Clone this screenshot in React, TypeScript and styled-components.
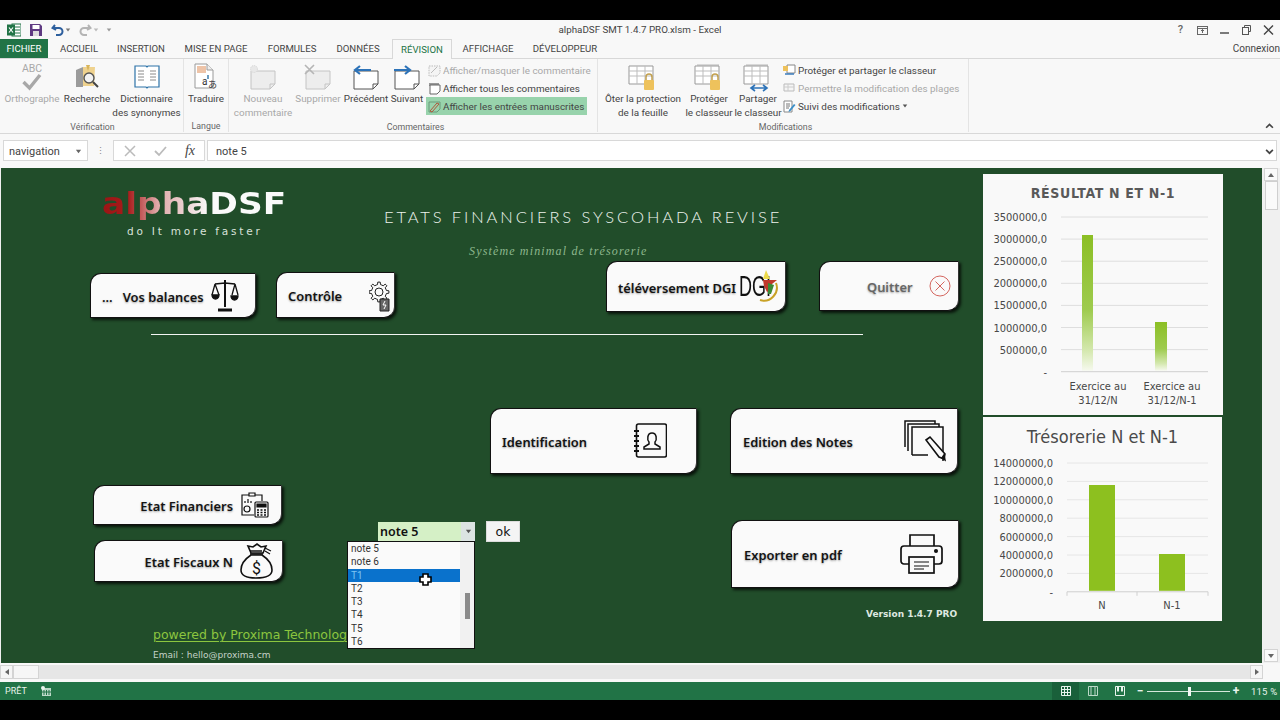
import React from "react";
import styled, { createGlobalStyle, css } from "styled-components";

const UI_FONT = `Roboto, "Open Sans", sans-serif`;
const SHEET_FONT = `"DejaVu Sans", Verdana, sans-serif`;
const NARROW_FONT = `"DejaVu Sans Condensed", "DejaVu Sans", sans-serif`;
const BUTTON_FONT = `"Noto Sans", "Open Sans", sans-serif`;

const GlobalStyle = createGlobalStyle`
  html, body {
    margin: 0;
    padding: 0;
    background: #000;
    width: 1280px;
    height: 720px;
    overflow: hidden;
  }
  * {
    box-sizing: border-box;
  }
`;

type BoxProps = { $x: number; $y: number; $w: number; $h: number };

const placed = css<BoxProps>`
  position: absolute;
  left: ${({ $x }) => $x}px;
  top: ${({ $y }) => $y}px;
  width: ${({ $w }) => $w}px;
  height: ${({ $h }) => $h}px;
`;

const Window = styled.div`
  width: 1280px;
  height: 720px;
  display: flex;
  flex-direction: column;
  font-family: ${UI_FONT};
  background: #f8f8f8;
  color: #444;
`;

const BlackBar = styled.div`
  height: 20px;
  flex: none;
  background: #000;
`;

/* title bar */
const TitleBar = styled.div`
  height: 19px;
  flex: none;
  position: relative;
  display: flex;
  align-items: center;
  justify-content: space-between;
  padding: 0 5px 0 7px;
`;

const QuickAccess = styled.div`
  display: flex;
  align-items: center;
`;

const QuickIcon = styled.span<{ $ml: number }>`
  display: flex;
  margin-left: ${({ $ml }) => $ml}px;
`;

const WindowTitle = styled.div`
  position: absolute;
  left: 0;
  right: 0;
  text-align: center;
  font-size: 9.8px;
  line-height: 19px;
  color: #444;
`;

const WindowControls = styled.div`
  position: relative;
  display: flex;
  align-items: center;
  gap: 9px;
`;

const HelpMark = styled.span`
  width: 13px;
  text-align: center;
  font-size: 11px;
  line-height: 13px;
  font-weight: 500;
  color: #666;
`;

/* tabs */
const TabRow = styled.div`
  height: 20px;
  flex: none;
  display: flex;
  align-items: stretch;
  border-bottom: 1px solid #d8d8d8;
  position: relative;
`;

const FileTab = styled.div`
  width: 48px;
  background: #217346;
  color: #fff;
  font-size: 9.6px;
  line-height: 20px;
  text-align: center;
`;

const Tab = styled.div<{ $active?: boolean; $w: number }>`
  width: ${({ $w }) => $w}px;
  text-align: center;
  font-size: 9.6px;
  line-height: 19px;
  color: ${({ $active }) => ($active ? "#217346" : "#444")};
  ${({ $active }) =>
    $active &&
    css`
      background: #f8f8f8;
      border: 1px solid #d8d8d8;
      border-bottom: 0;
      height: 20px;
    `}
`;

const SignIn = styled.div`
  position: absolute;
  right: 0;
  top: 0;
  font-size: 10px;
  line-height: 19px;
  color: #444;
`;

/* ribbon */
const Ribbon = styled.div`
  height: 75px;
  flex: none;
  display: flex;
  border-bottom: 1px solid #d8d8d8;
  position: relative;
`;

const RibbonGroup = styled.div<{ $w: number; $pl?: number }>`
  width: ${({ $w }) => $w}px;
  flex: none;
  display: flex;
  flex-direction: column;
  padding-left: ${({ $pl }) => $pl ?? 0}px;
  border-right: 1px solid #e4e4e4;
  margin-bottom: 1px;
`;

const GroupItems = styled.div`
  flex: 1;
  display: flex;
  padding-top: 3px;
`;

const GroupLabel = styled.div`
  height: 14px;
  font-size: 8.8px;
  line-height: 16px;
  text-align: center;
  color: #666;
`;

const BigButton = styled.div<{ $w: number; $off?: boolean }>`
  width: ${({ $w }) => $w}px;
  flex: none;
  display: flex;
  flex-direction: column;
  align-items: center;
  color: ${({ $off }) => ($off ? "#a8a8a8" : "#444")};
`;

const BigIcon = styled.div`
  height: 30px;
  display: flex;
  align-items: center;
  justify-content: center;
`;

const BigLabel = styled.div`
  font-size: 9.9px;
  line-height: 13.5px;
  text-align: center;
  white-space: nowrap;
`;

const SmallStack = styled.div`
  display: flex;
  flex-direction: column;
  margin-top: -1px;
`;

const SmallRow = styled.div<{ $off?: boolean; $on?: boolean; $w?: number }>`
  height: 18px;
  width: ${({ $w }) => ($w ? `${$w}px` : "auto")};
  display: flex;
  align-items: center;
  gap: 2px;
  padding-left: 2px;
  font-size: 9.9px;
  white-space: nowrap;
  color: ${({ $off }) => ($off ? "#a8a8a8" : "#444")};
  background: ${({ $on }) => ($on ? "#98d3ac" : "transparent")};

  svg {
    flex: none;
  }
`;

const Collapse = styled.div`
  position: absolute;
  right: 6px;
  bottom: 3px;
  display: flex;
`;

/* formula bar */
const FormulaWrap = styled.div`
  height: 34px;
  flex: none;
  display: flex;
  align-items: flex-start;
  padding: 6px 3px 0;
`;

const FieldBox = styled.div<{ $w: number }>`
  width: ${({ $w }) => $w}px;
  flex: none;
  height: 21px;
  background: #fff;
  border: 1px solid #d8d8d8;
  display: flex;
  align-items: center;
  font-size: 11px;
  color: #444;
`;

const NameBox = styled(FieldBox)`
  justify-content: space-between;
  padding: 1px 5px 0;
`;

const Grip = styled.div`
  width: 25px;
  flex: none;
  height: 21px;
  display: flex;
  align-items: center;
  justify-content: center;
  color: #888;
  font-size: 9px;
`;

const FormulaTools = styled(FieldBox)`
  justify-content: space-between;
  padding: 0 9px 0 10px;
  font-family: "Liberation Serif", serif;
  font-style: italic;
  font-size: 14px;
`;

const FormulaInput = styled(FieldBox)`
  margin-left: 2px;
  flex: 1;
  justify-content: space-between;
  padding: 1px 2px 0 8px;
`;

/* worksheet canvas */
const SheetRow = styled.div`
  height: 495px;
  flex: none;
  display: flex;
`;

const Sheet = styled.div`
  position: relative;
  width: 1262px;
  background: #214d2a;
  border-left: 1px solid #f0f0f0;
  overflow: hidden;
  font-family: ${SHEET_FONT};
`;

const ScrollColumn = styled.div`
  flex: 1;
  display: flex;
  flex-direction: column;
  align-items: center;
  justify-content: space-between;
  background: #f0f0f0;
  padding: 0 1px 1px;
  position: relative;
`;

const ScrollArrow = styled.div`
  width: 14px;
  height: 13px;
  background: #fafafa;
  border: 1px solid #d4d4d4;
  display: flex;
  align-items: center;
  justify-content: center;
`;

const ScrollThumbV = styled.div`
  position: absolute;
  left: 3px;
  top: 13px;
  width: 13px;
  height: 29px;
  background: #fafafa;
  border: 1px solid #cfcfcf;
`;

const Logo = styled.div`
  ${placed};
  text-align: left;
`;

const LogoMark = styled.div`
  font-size: 31px;
  line-height: 38px;
  font-weight: 700;
  width: 166px;
  white-space: nowrap;
  transform: scaleX(1.11);
  transform-origin: left center;
  background: linear-gradient(90deg, #9a1515 0, #a81a1a 14%, #e0a8a8 30%, #ecd4d4 46%, #fafafa 58%, #fafafa 100%);
  -webkit-background-clip: text;
  background-clip: text;
  color: transparent;
`;

const LogoTag = styled.div`
  margin: 2px 0 0 25px;
  font-size: 10.5px;
  line-height: 14px;
  letter-spacing: 2.8px;
  white-space: nowrap;
  color: #d9e2da;
`;

const HeadLine = styled.div`
  ${placed};
  font-family: Lato, sans-serif;
  font-weight: 300;
  font-size: 16.5px;
  line-height: 18px;
  letter-spacing: 2.9px;
  white-space: nowrap;
  color: #edf3ed;
`;

const SubLine = styled.div`
  ${placed};
  font-family: "Liberation Serif", serif;
  font-style: italic;
  font-size: 12px;
  line-height: 14px;
  letter-spacing: 1.15px;
  white-space: nowrap;
  color: #8eb88e;
`;

const Rule = styled.div`
  ${placed};
  background: #f2f5f2;
`;

const SheetButton = styled.div<BoxProps & { $justify?: string; $pad: string }>`
  ${placed};
  display: flex;
  align-items: center;
  justify-content: ${({ $justify }) => $justify ?? "space-between"};
  padding: ${({ $pad }) => $pad};
  background: #fafafa;
  border: 1px solid #111;
  border-right-color: #333;
  border-radius: 11px 0 11px 0;
  box-shadow: 2px 2px 3px rgba(0, 0, 0, 0.75);
`;

const ButtonText = styled.span<{ $muted?: boolean }>`
  font-family: ${BUTTON_FONT};
  font-weight: 600;
  font-size: 12.9px;
  margin-top: 2px;
  white-space: nowrap;
  color: ${({ $muted }) => ($muted ? "#666" : "#141414")};
  text-shadow: 0 1px 2px rgba(0, 0, 0, 0.35);
`;

const DgiMark = styled.span`
  position: relative;
  display: inline-flex;
  align-items: center;
  margin-left: 3px;
  width: 42px;
  height: 42px;
`;

const DgiText = styled.span`
  font-family: "Liberation Sans", sans-serif;
  font-size: 29px;
  color: #111;
  transform: scaleX(0.62);
  transform-origin: left center;
`;

const DgiFlag = styled.svg`
  position: absolute;
  left: 0;
  top: 0;
`;

const Combo = styled.div<BoxProps>`
  ${placed};
  display: flex;
`;

const ComboValue = styled.div`
  flex: 1;
  background: #d5f0c6;
  font-family: ${BUTTON_FONT};
  font-size: 12.5px;
  font-weight: 600;
  line-height: 19px;
  padding-left: 2px;
  color: #111;
`;

const ComboArrow = styled.div`
  width: 14px;
  background: #dce4e2;
  display: flex;
  align-items: center;
  justify-content: center;
`;

const OkButton = styled.div<BoxProps>`
  ${placed};
  background: #f4f4f4;
  border: 1px solid #dcdcdc;
  font-size: 12.5px;
  line-height: 20px;
  text-align: center;
  color: #111;
`;

const DropList = styled.div<BoxProps>`
  ${placed};
  display: flex;
  background: #fafafa;
  border: 1px solid #111;
  overflow: hidden;
  z-index: 3;
  font-family: ${UI_FONT};
`;

const DropRows = styled.div`
  width: 112px;
  flex: none;
`;

const DropRow = styled.div<{ $on?: boolean }>`
  height: 13.3px;
  font-size: 10px;
  line-height: 13.3px;
  padding-left: 3px;
  color: ${({ $on }) => ($on ? "#7cc4f2" : "#333")};
  background: ${({ $on }) => ($on ? "#0a72cc" : "transparent")};
`;

const DropScroll = styled.div`
  flex: 1;
  background: #f1f1f1;
  position: relative;
`;

const DropThumb = styled.div<{ $top: number }>`
  position: absolute;
  left: 5px;
  top: ${({ $top }) => $top}px;
  width: 5px;
  height: 26px;
  background: #8a8a8a;
`;

const Pointer = styled.svg`
  position: absolute;
  left: 418px;
  top: 405px;
  z-index: 4;
`;

const FootText = styled.div<BoxProps & { $size: number; $color: string; $spacing: number; $bold?: boolean }>`
  ${placed};
  font-size: ${({ $size }) => $size}px;
  line-height: ${({ $h }) => $h}px;
  color: ${({ $color }) => $color};
  letter-spacing: ${({ $spacing }) => $spacing}px;
  font-weight: ${({ $bold }) => ($bold ? 600 : 400)};
  white-space: nowrap;
`;

const PoweredLink = styled(FootText)`
  text-decoration: underline;
  text-decoration-thickness: 1px;
  text-underline-offset: 2px;
`;

const ChartPanel = styled.div<BoxProps>`
  ${placed};
  background: #f9f9f9;
`;

const ChartTitle = styled.div<{ $top: number; $bold?: boolean; $size: number }>`
  position: absolute;
  left: 0;
  right: 0;
  top: ${({ $top }) => $top}px;
  text-align: center;
  font-family: ${NARROW_FONT};
  font-size: ${({ $size }) => $size}px;
  line-height: 20px;
  font-weight: ${({ $bold }) => ($bold ? 700 : 400)};
  letter-spacing: ${({ $bold }) => ($bold ? 0.65 : 0)}px;
  color: ${({ $bold }) => ($bold ? "#595959" : "#4a4a4a")};
`;

const ChartSvg = styled.svg`
  display: block;
  font-family: ${NARROW_FONT};
  font-size: 11px;
  fill: #484848;
`;

/* bottom bars */
const HScroll = styled.div`
  height: 19px;
  flex: none;
  background: #f8f8f8;
  padding: 2px 17px 3px 0;
  display: flex;
`;

const HTrack = styled.div`
  flex: 1;
  background: #e6e6e6;
  display: flex;
  align-items: stretch;
  justify-content: space-between;
`;

const HLeft = styled.div`
  display: flex;
`;

const HEnd = styled.div`
  width: 13px;
  display: flex;
  align-items: center;
  justify-content: center;
  background: #f6f6f6;
  border: 1px solid #d4d4d4;
`;

const HThumb = styled.div`
  width: 26px;
  background: #f6f6f6;
  border: 1px solid #d4d4d4;
`;

const StatusBar = styled.div`
  height: 18px;
  flex: none;
  background: #217346;
  color: #e8f3ec;
  font-size: 9px;
  display: flex;
  align-items: stretch;
  padding-left: 5px;
  position: relative;
`;

const StatusLeft = styled.div`
  display: flex;
  align-items: center;
  gap: 14px;
`;

const StatusRight = styled.div`
  margin-left: auto;
  display: flex;
  align-items: center;
  padding-right: 6px;
`;

const ViewButton = styled.div<{ $on?: boolean }>`
  width: 27px;
  height: 18px;
  display: flex;
  align-items: center;
  justify-content: center;
  background: ${({ $on }) => ($on ? "#19603a" : "transparent")};
`;

const ZoomSlider = styled.div`
  width: 83px;
  height: 1px;
  background: #d5e8dc;
  position: relative;
  margin: 0 1px 0 2px;
`;

const ZoomThumb = styled.div`
  position: absolute;
  left: 41px;
  top: -4px;
  width: 3px;
  height: 9px;
  background: #f2f7f4;
`;

const ZoomSign = styled.span<{ $ml?: number }>`
  font-size: 12px;
  width: 10px;
  margin-left: ${({ $ml }) => $ml ?? 0}px;
  text-align: center;
  line-height: 12px;
  font-weight: 700;
`;

const ZoomValue = styled.span`
  margin-left: 10px;
  width: 23px;
  text-align: right;
  white-space: nowrap;
  font-size: 9.5px;
  letter-spacing: 0.2px;
`;

/* ribbon icons */
const SpellIcon = () => (
  <svg width="36" height="30" viewBox="0 0 36 30">
    <text x="18" y="10" textAnchor="middle" fontSize="10.5" fill="#a9a9a9" fontFamily="Roboto">ABC</text>
    <path d="M9.5 20l6 6L26 13" stroke="#a8a8a8" strokeWidth="3.4" fill="none" />
  </svg>
);

const SearchIcon = () => (
  <svg width="28" height="26" viewBox="0 0 28 26">
    <path d="M3 6l7-3v20H3z" fill="#9b9b9b" />
    <path d="M10 3h5l7 0 -1 19H10z" fill="#efd28e" />
    <path d="M13 1l4 0 -2 6z" fill="#d9b55a" />
    <circle cx="16" cy="14" r="5" fill="#f2f2f2" stroke="#555" strokeWidth="1.4" />
    <path d="M20 18l5 5" stroke="#444" strokeWidth="2" />
  </svg>
);

const BookIcon = () => (
  <svg width="28" height="26" viewBox="0 0 28 26">
    <path d="M2 2h11l1 1 1-1h11v21H15l-1 1-1-1H2z" fill="#fff" stroke="#2d73a8" strokeWidth="1.2" />
    <path d="M5 7h6M5 10h6M5 13h6M5 16h6M17 7h6M17 10h6M17 13h6M17 16h6" stroke="#8a8a8a" />
  </svg>
);

const TranslateIcon = () => (
  <svg width="26" height="28" viewBox="0 0 26 28">
    <path d="M2 1h12l6 6v18H2z" fill="#fff" stroke="#9a9a9a" />
    <path d="M4 3h9v7H4z" fill="#eec4a8" />
    <path d="M14 1v6h6" fill="#eee" stroke="#9a9a9a" />
    <text x="9" y="22" fontSize="10" fill="#333" fontFamily="Roboto">a</text>
    <text x="15" y="25" fontSize="9" fill="#333" fontFamily="Noto Sans CJK JP">あ</text>
    <path d="M15 12v4" stroke="#2d73a8" strokeWidth="1.4" />
  </svg>
);

const NoteIcon = ({ off, mark }: { off?: boolean; mark: "new" | "del" | "prev" | "next" }) => {
  const line = off ? "#c4c4c4" : "#555";
  return (
    <svg width="30" height="26" viewBox="0 0 30 26">
      <path d="M3 7h24v13l-5 5H3z" fill={off ? "#ededed" : "#fff"} stroke={line} />
      <path d="M27 20h-5v5" fill="none" stroke={line} />
      {mark === "new" && <circle cx="6" cy="5" r="3.5" fill="#e8e8e8" stroke="#d5d5d5" strokeDasharray="1 1" />}
      {mark === "del" && <path d="M2 1l9 9M11 1l-9 9" stroke="#b5b5b5" strokeWidth="1.6" />}
      {mark === "prev" && <path d="M20 6H5m4-4L4 6l5 4" fill="none" stroke="#2d73b8" strokeWidth="2.2" />}
      {mark === "next" && <path d="M2 6h15m-4-4l5 4-5 4" fill="none" stroke="#2d73b8" strokeWidth="2.2" />}
    </svg>
  );
};

const MiniNote = ({ kind }: { kind: "toggle" | "all" | "ink" }) => (
  <svg width="13" height="13" viewBox="0 0 13 13">
    {kind === "toggle" && (
      <>
        <path d="M1 2h11v7l-3 3H1z" fill="#f4f4f4" stroke="#bbb" strokeDasharray="1.5 1" />
        <path d="M3 9l6-6" stroke="#bbb" />
      </>
    )}
    {kind === "all" && (
      <>
        <path d="M1 1h10v3H1z" fill="#999" />
        <path d="M2 3h10v6l-3 3H2z" fill="#fff" stroke="#666" />
      </>
    )}
    {kind === "ink" && (
      <>
        <path d="M1 2h11v7l-3 3H1z" fill="none" stroke="#6a9a7a" />
        <path d="M2 11L9 3l2 1-7 8z" fill="none" stroke="#b0553a" />
      </>
    )}
  </svg>
);

const ProtectIcon = ({ arrows, panes }: { arrows?: boolean; panes?: boolean }) => (
  <svg width="30" height="29" viewBox="0 0 30 29">
    {panes && <path d="M3 1h22v3H3z" fill="#d8d8d8" />}
    <path d="M1 3h24v18H1z" fill="#fff" stroke="#999" />
    <path d="M1 8h24M1 13h24M9 3v18M17 3v18" stroke="#bdbdbd" />
    {!arrows && (
      <>
        <path d="M18 17v-3a3 3 0 016 0v3" fill="none" stroke="#c2a04e" strokeWidth="1.5" />
        <rect x="16" y="17" width="10" height="10" rx="1" fill="#eec25c" />
      </>
    )}
    {arrows && <path d="M9 25h14M12 22l-4 3 4 3M20 22l4 3-4 3" fill="none" stroke="#2d73b8" strokeWidth="1.6" />}
  </svg>
);

const MiniSheet = ({ kind }: { kind: "share" | "range" | "track" }) => (
  <svg width="13" height="13" viewBox="0 0 13 13">
    {kind === "share" && (
      <>
        <path d="M4 1h8v8H4z" fill="#fff" stroke="#888" />
        <rect x="0" y="2" width="5" height="5" fill="#eec25c" />
        <path d="M2 10h9" stroke="#2d73b8" strokeWidth="1.4" />
      </>
    )}
    {kind === "range" && (
      <>
        <path d="M1 2h10v7H1z" fill="#f5f5f5" stroke="#bbb" />
        <path d="M1 5h10M5 2v7" stroke="#ccc" />
      </>
    )}
    {kind === "track" && (
      <>
        <path d="M1 1h8v11H1z" fill="#fff" stroke="#888" />
        <path d="M3 4h4M3 6h4M3 8h3" stroke="#777" />
        <path d="M6 10l5-6 1.5 1-5 6-2 1z" fill="#3c8fc8" />
      </>
    )}
  </svg>
);

const Chevron = ({ up, size = 8 }: { up?: boolean; size?: number }) => (
  <svg width={size} height={size} viewBox="0 0 8 8">
    <path d={up ? "M1 6l3-3 3 3" : "M1 2.5l3 3 3-3"} fill="none" stroke="#444" strokeWidth="1.5" />
  </svg>
);

const Triangle = ({ dir, color = "#666", size = 8 }: { dir: "up" | "down" | "left" | "right"; color?: string; size?: number }) => {
  const d = {
    up: "M1 6h6L4 2z",
    down: "M1 2h6L4 6z",
    left: "M6 1v6L2 4z",
    right: "M2 1v6l4-3z",
  }[dir];
  return (
    <svg width={size} height={size} viewBox="0 0 8 8">
      <path d={d} fill={color} />
    </svg>
  );
};

/* icons of the sheet buttons */
const ScaleIcon = () => (
  <svg width="28" height="34" viewBox="0 0 28 34" fill="none" stroke="#111" strokeWidth="1.3">
    <path d="M14 1v27" strokeWidth="2" />
    <path d="M4 5l10-1 10 1" />
    <path d="M4 5L1 16M4 5l4 11M24 5l-3 11M24 5l3 11" />
    <path d="M1 16h7a3.5 4 0 01-7 0zM20 17h7a3.5 4 0 01-7 0z" fill="#111" />
    <path d="M7 31h14" strokeWidth="3" />
  </svg>
);

// outline of a toothed wheel, teeth spread evenly round the centre
const gearPath = (cx: number, cy: number, outer: number, inner: number, teeth: number) => {
  const points: string[] = [];
  for (let i = 0; i < teeth; i++) {
    const step = (Math.PI * 2) / teeth;
    const a = i * step;
    [
      [inner, a - step * 0.5],
      [inner, a - step * 0.25],
      [outer, a - step * 0.15],
      [outer, a + step * 0.15],
      [inner, a + step * 0.25],
    ].forEach(([r, t]) => points.push(`${(cx + r * Math.cos(t)).toFixed(1)} ${(cy + r * Math.sin(t)).toFixed(1)}`));
  }
  return `M${points.join("L")}z`;
};

const GearDocIcon = () => (
  <svg width="22" height="34" viewBox="0 0 22 34" fill="none" stroke="#222" strokeWidth="1">
    <path d={gearPath(10, 14, 10, 7.5, 8)} />
    <circle cx="10" cy="14" r="4" />
    <path d="M11 21h9v12h-9z" fill="#666" stroke="#222" />
    <path d="M16 23l-2 4h3l-2 4" stroke="#fff" />
  </svg>
);

const CloseCircleIcon = () => (
  <svg width="22" height="22" viewBox="0 0 22 22" fill="none" stroke="#d4665f" strokeWidth="1">
    <circle cx="11" cy="11" r="10" />
    <path d="M6.5 6.5l9 9M15.5 6.5l-9 9" />
  </svg>
);

const ContactIcon = () => (
  <svg width="34" height="36" viewBox="0 0 34 36" fill="none" stroke="#111" strokeWidth="1.6">
    <rect x="3.5" y="1" width="30" height="33" rx="2" />
    <path d="M1 8h5M1 13h5M1 18h5M1 23h5M1 28h5" strokeWidth="1.8" />
    <path d="M11 26v-2l5-3v-2c-2-2-2-9 3-9s5 7 3 9v2l5 3v2z" strokeWidth="1.5" />
  </svg>
);

const PagesIcon = () => (
  <svg width="42" height="42" viewBox="0 0 42 42" fill="none" stroke="#111" strokeWidth="1.5">
    <path d="M1 27V1h30v3" />
    <path d="M4 31V4h31v3" fill="#fafafa" />
    <path d="M8 35V7h31v34" fill="#fafafa" />
    <path d="M8 35h16" />
    <path d="M22 20l4-3 15 17-1 5-5-2z" fill="#fafafa" strokeWidth="1.6" />
    <path d="M38 38l2-3 1 5z" fill="#111" />
  </svg>
);

const PrinterIcon = () => (
  <svg width="43" height="40" viewBox="0 0 43 40" fill="none" stroke="#111" strokeWidth="1.7">
    <path d="M10 12V1h24v11" />
    <path d="M9 30H4a3 3 0 01-3-3V15a3 3 0 013-3h35a3 3 0 013 3v12a3 3 0 01-3 3h-5" />
    <rect x="9" y="23" width="25" height="16" />
    <path d="M14 28h15M14 32h15M14 35h10" strokeWidth="1.2" />
    <circle cx="36" cy="17" r="1.2" fill="#111" />
  </svg>
);

const ReportIcon = () => (
  <svg width="28" height="26" viewBox="0 0 28 26" fill="none" stroke="#111" strokeWidth="1.2">
    <path d="M13 23H1V3h20v6" />
    <path d="M8 1h6v3H8z" fill="#fafafa" />
    <circle cx="6" cy="17" r="3" />
    <path d="M4 11v-2M7 11V7M10 11V9" />
    <rect x="14" y="10" width="13" height="15" rx="1" fill="#fafafa" />
    <path d="M16 12h9v3h-9z" fill="#111" />
    <path d="M16 18h2M19.5 18h2M23 18h2M16 20.5h2M19.5 20.5h2M23 20.5h2M16 23h2M19.5 23h2M23 23h2" strokeWidth="1.4" />
  </svg>
);

const MoneyBagIcon = () => (
  <svg width="33" height="37" viewBox="0 0 33 37" fill="none" stroke="#111" strokeWidth="1.6">
    <path d="M8 3l5 1 4-3 4 3 5-1-3 7H11z" />
    <path d="M10 8l12 0M10 11h13" />
    <path d="M25 5l6 3M25 8l5 3" strokeWidth="1.2" />
    <path d="M11 12C5 16 1 22 1 27c0 6 5 8 15 8s16-2 16-8c0-5-4-11-10-15z" />
    <text x="16.5" y="31" textAnchor="middle" fontSize="16" fill="#111" stroke="none" fontFamily="Roboto">$</text>
  </svg>
);

const CrossPointer = () => (
  <Pointer width="13" height="13" viewBox="0 0 13 13">
    <path d="M4 1h5v3h3v5H9v3H4V9H1V4h3z" fill="#fff" stroke="#000" strokeWidth="1.6" />
  </Pointer>
);

type ChartSpec = {
  width: number;
  height: number;
  ticks: string[];
  gridTop: number;
  gridStep: number;
  gridLeft: number;
  gridRight: number;
  labelRight: number;
  gridColor: string;
  bars: { x: number; w: number; top: number }[];
  fill: string;
  categories: { x: number; lines: string[] }[];
  labelY: number;
  tickMarks?: number[];
};

const resultChart: ChartSpec = {
  width: 240,
  height: 241,
  ticks: ["3500000,0", "3000000,0", "2500000,0", "2000000,0", "1500000,0", "1000000,0", "500000,0", "-"],
  gridTop: 43,
  gridStep: 22.1,
  gridLeft: 78,
  gridRight: 225,
  labelRight: 64,
  gridColor: "#dedede",
  bars: [
    { x: 99, w: 11, top: 61 },
    { x: 172, w: 12, top: 148 },
  ],
  fill: "url(#fadeBar)",
  categories: [
    { x: 115, lines: ["Exercice au", "31/12/N"] },
    { x: 189, lines: ["Exercice au", "31/12/N-1"] },
  ],
  labelY: 216,
};

const cashChart: ChartSpec = {
  width: 239,
  height: 204,
  ticks: ["14000000,0", "12000000,0", "10000000,0", "8000000,0", "6000000,0", "4000000,0", "2000000,0", "-"],
  gridTop: 46,
  gridStep: 18.4,
  gridLeft: 84,
  gridRight: 225,
  labelRight: 70,
  gridColor: "#e6e6e6",
  bars: [
    { x: 106, w: 26, top: 68 },
    { x: 176, w: 26, top: 137 },
  ],
  fill: "#8dc01f",
  categories: [
    { x: 119, lines: ["N"] },
    { x: 189, lines: ["N-1"] },
  ],
  labelY: 192,
  tickMarks: [84, 154, 225],
};

const ChartPlot = ({ spec }: { spec: ChartSpec }) => {
  const bottom = spec.gridTop + spec.gridStep * (spec.ticks.length - 1);
  return (
    <ChartSvg width={spec.width} height={spec.height} viewBox={`0 0 ${spec.width} ${spec.height}`}>
      <defs>
        <linearGradient id="fadeBar" x1="0" y1="0" x2="0" y2="1">
          <stop offset="0" stopColor="#8cbf25" />
          <stop offset="0.55" stopColor="#9ecb4e" />
          <stop offset="0.85" stopColor="#d4e8ae" />
          <stop offset="1" stopColor="#f6f9ee" />
        </linearGradient>
      </defs>
      {spec.ticks.map((tick, i) => {
        const y = spec.gridTop + spec.gridStep * i;
        return (
          <g key={tick}>
            <line x1={spec.gridLeft} x2={spec.gridRight} y1={y} y2={y} stroke={i === spec.ticks.length - 1 ? "#cfcfcf" : spec.gridColor} />
            <text x={spec.labelRight} y={y + 4} textAnchor="end">{tick}</text>
          </g>
        );
      })}
      {spec.tickMarks?.map((x) => (
        <line key={x} x1={x} x2={x} y1={bottom} y2={bottom + 4} stroke="#cfcfcf" />
      ))}
      {spec.bars.map((bar) => (
        <rect key={bar.x} x={bar.x} y={bar.top} width={bar.w} height={bottom - bar.top - 1} fill={spec.fill} />
      ))}
      {spec.categories.map((cat) =>
        cat.lines.map((line, i) => (
          <text key={line} x={cat.x} y={spec.labelY + i * 14} textAnchor="middle">{line}</text>
        ))
      )}
    </ChartSvg>
  );
};

const listItems = ["note 5", "note 6", "T1", "T2", "T3", "T4", "T5", "T6"];

export default function App() {
  return (
    <Window>
      <GlobalStyle />
      <BlackBar />
      <TitleBar>
        <QuickAccess>
          <svg width="14" height="14" viewBox="0 0 14 14">
            <rect x="5" y="1" width="9" height="12" fill="#fff" stroke="#217346" />
            <path d="M7 4h6M7 7h6M7 10h6" stroke="#217346" />
            <rect x="0" y="1.5" width="8" height="11" fill="#217346" />
            <path d="M2 4.5l4 5M6 4.5l-4 5" stroke="#fff" strokeWidth="1.2" />
          </svg>
          <QuickIcon $ml={9}>
            <svg width="12" height="12" viewBox="0 0 12 12">
              <path d="M0 0h10l2 2v10H0z" fill="#5f3a82" />
              <rect x="2.5" y="1" width="7" height="4" fill="#fff" />
              <rect x="3" y="7" width="6" height="5" fill="#ddd" />
            </svg>
          </QuickIcon>
          <QuickIcon $ml={9}>
            <svg width="13" height="12" viewBox="0 0 13 12" fill="none" stroke="#2d5f9e" strokeWidth="2">
              <path d="M4 1L1.5 4 5 6M2 4h6a3.5 3.5 0 010 7H5" />
            </svg>
          </QuickIcon>
          <QuickIcon $ml={1}><Triangle dir="down" color="#777" size={6} /></QuickIcon>
          <QuickIcon $ml={8}>
            <svg width="13" height="12" viewBox="0 0 13 12" fill="none" stroke="#b4b4b4" strokeWidth="2">
              <path d="M9 1l2.5 3L8 6M11 4H5a3.5 3.5 0 000 7h3" />
            </svg>
          </QuickIcon>
          <QuickIcon $ml={1}><Triangle dir="down" color="#bbb" size={6} /></QuickIcon>
          <QuickIcon $ml={7}><Triangle dir="down" color="#999" size={6} /></QuickIcon>
        </QuickAccess>
        <WindowTitle>alphaDSF SMT 1.4.7 PRO.xlsm - Excel</WindowTitle>
        <WindowControls>
          <HelpMark>?</HelpMark>
          <svg width="13" height="12" viewBox="0 0 13 12" fill="none" stroke="#666">
            <rect x="1.5" y="2.5" width="10" height="8" />
            <path d="M1.5 4.5h10M6.5 9V5.5M5 7l1.5-1.5L8 7" />
          </svg>
          <svg width="13" height="12" viewBox="0 0 13 12" stroke="#444" strokeWidth="1.4">
            <path d="M2 9h9" />
          </svg>
          <svg width="13" height="12" viewBox="0 0 13 12" fill="none" stroke="#555">
            <path d="M4.5 3.5V1.5h6v6h-2" />
            <rect x="2.5" y="3.5" width="6" height="7" />
          </svg>
          <svg width="13" height="12" viewBox="0 0 13 12" stroke="#444" strokeWidth="1.4">
            <path d="M2 1.5l9 9M11 1.5l-9 9" />
          </svg>
        </WindowControls>
      </TitleBar>

      <TabRow>
        <FileTab>FICHIER</FileTab>
        <Tab $w={62}>ACCUEIL</Tab>
        <Tab $w={62}>INSERTION</Tab>
        <Tab $w={88}>MISE EN PAGE</Tab>
        <Tab $w={64}>FORMULES</Tab>
        <Tab $w={68}>DONNÉES</Tab>
        <Tab $w={60} $active>RÉVISION</Tab>
        <Tab $w={72}>AFFICHAGE</Tab>
        <Tab $w={82}>DÉVELOPPEUR</Tab>
        <SignIn>Connexion</SignIn>
      </TabRow>

      <Ribbon>
        <RibbonGroup $w={184} $pl={2}>
          <GroupItems>
            <BigButton $w={60} $off>
              <BigIcon><SpellIcon /></BigIcon>
              <BigLabel>Orthographe</BigLabel>
            </BigButton>
            <BigButton $w={50}>
              <BigIcon><SearchIcon /></BigIcon>
              <BigLabel>Recherche</BigLabel>
            </BigButton>
            <BigButton $w={69}>
              <BigIcon><BookIcon /></BigIcon>
              <BigLabel>Dictionnaire<br />des synonymes</BigLabel>
            </BigButton>
          </GroupItems>
          <GroupLabel>Vérification</GroupLabel>
        </RibbonGroup>
        <RibbonGroup $w={45}>
          <GroupItems>
            <BigButton $w={44}>
              <BigIcon><TranslateIcon /></BigIcon>
              <BigLabel>Traduire</BigLabel>
            </BigButton>
          </GroupItems>
          <GroupLabel>Langue</GroupLabel>
        </RibbonGroup>
        <RibbonGroup $w={369} $pl={5}>
          <GroupItems>
            <BigButton $w={58} $off>
              <BigIcon><NoteIcon off mark="new" /></BigIcon>
              <BigLabel>Nouveau<br />commentaire</BigLabel>
            </BigButton>
            <BigButton $w={52} $off>
              <BigIcon><NoteIcon off mark="del" /></BigIcon>
              <BigLabel>Supprimer</BigLabel>
            </BigButton>
            <BigButton $w={44}>
              <BigIcon><NoteIcon mark="prev" /></BigIcon>
              <BigLabel>Précédent</BigLabel>
            </BigButton>
            <BigButton $w={38}>
              <BigIcon><NoteIcon mark="next" /></BigIcon>
              <BigLabel>Suivant</BigLabel>
            </BigButton>
            <SmallStack>
              <SmallRow $off><MiniNote kind="toggle" />Afficher/masquer le commentaire</SmallRow>
              <SmallRow><MiniNote kind="all" />Afficher tous les commentaires</SmallRow>
              <SmallRow $on $w={161}><MiniNote kind="ink" />Afficher les entrées manuscrites</SmallRow>
            </SmallStack>
          </GroupItems>
          <GroupLabel>Commentaires</GroupLabel>
        </RibbonGroup>
        <RibbonGroup $w={371} $pl={5}>
          <GroupItems>
            <BigButton $w={80}>
              <BigIcon><ProtectIcon /></BigIcon>
              <BigLabel>Ôter la protection<br />de la feuille</BigLabel>
            </BigButton>
            <BigButton $w={52}>
              <BigIcon><ProtectIcon panes /></BigIcon>
              <BigLabel>Protéger<br />le classeur</BigLabel>
            </BigButton>
            <BigButton $w={46}>
              <BigIcon><ProtectIcon panes arrows /></BigIcon>
              <BigLabel>Partager<br />le classeur</BigLabel>
            </BigButton>
            <SmallStack>
              <SmallRow><MiniSheet kind="share" />Protéger et partager le classeur</SmallRow>
              <SmallRow $off><MiniSheet kind="range" />Permettre la modification des plages</SmallRow>
              <SmallRow><MiniSheet kind="track" />Suivi des modifications <Triangle dir="down" color="#555" size={6} /></SmallRow>
            </SmallStack>
          </GroupItems>
          <GroupLabel>Modifications</GroupLabel>
        </RibbonGroup>
        <Collapse><Chevron up size={9} /></Collapse>
      </Ribbon>

      <FormulaWrap>
        <NameBox $w={85}>
          navigation
          <Triangle dir="down" color="#666" size={7} />
        </NameBox>
        <Grip>⋮</Grip>
        <FormulaTools $w={92}>
          <svg width="12" height="12" viewBox="0 0 12 12" stroke="#bbb" strokeWidth="1.5">
            <path d="M1 1l10 10M11 1L1 11" />
          </svg>
          <svg width="13" height="12" viewBox="0 0 13 12" fill="none" stroke="#bbb" strokeWidth="1.8">
            <path d="M1 6l4 4 7-8" />
          </svg>
          <span>fx</span>
        </FormulaTools>
        <FormulaInput $w={1071}>
          note 5
          <Chevron size={9} />
        </FormulaInput>
      </FormulaWrap>

      <SheetRow>
        <Sheet>
          <Logo $x={101} $y={16} $w={200} $h={60}>
            <LogoMark>alphaDSF</LogoMark>
            <LogoTag>do It more faster</LogoTag>
          </Logo>
          <HeadLine $x={383} $y={40} $w={420} $h={18}>ETATS FINANCIERS SYSCOHADA REVISE</HeadLine>
          <SubLine $x={468} $y={76} $w={200} $h={14}>Système minimal de trésorerie</SubLine>

          <SheetButton $x={89} $y={105} $w={166} $h={45} $pad="0 16px 0 11px">
            <ButtonText>...&nbsp;&nbsp;&nbsp;Vos balances</ButtonText>
            <ScaleIcon />
          </SheetButton>
          <SheetButton $x={275} $y={104} $w={119} $h={46} $pad="0 3px 0 11px">
            <ButtonText>Contrôle</ButtonText>
            <GearDocIcon />
          </SheetButton>
          <SheetButton $x={605} $y={93} $w={180} $h={51} $pad="0 8px 0 11px">
            <ButtonText>téléversement DGI</ButtonText>
            <DgiMark>
              <DgiText>DGI</DgiText>
              <DgiFlag width="42" height="42" viewBox="0 0 42 42">
                <path d="M27 4l4 9h-7z" fill="#ecd94a" />
                <path d="M24 14h14l-5 4-1 6-4 2-3-6z" fill="#c0392b" />
                <path d="M29 17l6 2-3 9h-3z" fill="#3c8a35" />
                <path d="M37 17a13 13 0 01-16 17" fill="none" stroke="#c9a227" strokeWidth="2" />
              </DgiFlag>
            </DgiMark>
          </SheetButton>
          <SheetButton $x={818} $y={93} $w={140} $h={50} $pad="0 7px 0 47px">
            <ButtonText $muted>Quitter</ButtonText>
            <CloseCircleIcon />
          </SheetButton>

          <Rule $x={150} $y={166} $w={712} $h={1} />

          <SheetButton $x={489} $y={240} $w={207} $h={66} $pad="0 29px 0 11px">
            <ButtonText>Identification</ButtonText>
            <ContactIcon />
          </SheetButton>
          <SheetButton $x={729} $y={240} $w={228} $h={66} $pad="0 11px 0 12px">
            <ButtonText>Edition des Notes</ButtonText>
            <PagesIcon />
          </SheetButton>
          <SheetButton $x={730} $y={352} $w={228} $h={68} $pad="0 15px 0 12px">
            <ButtonText>Exporter en pdf</ButtonText>
            <PrinterIcon />
          </SheetButton>
          <SheetButton $x={92} $y={317} $w={189} $h={40} $justify="flex-end" $pad="0 12px 0 0">
            <ButtonText>Etat Financiers</ButtonText>
            <QuickIcon $ml={8}><ReportIcon /></QuickIcon>
          </SheetButton>
          <SheetButton $x={93} $y={372} $w={189} $h={42} $justify="flex-end" $pad="0 9px 0 0">
            <ButtonText>Etat Fiscaux N</ButtonText>
            <QuickIcon $ml={7}><MoneyBagIcon /></QuickIcon>
          </SheetButton>

          <Combo $x={377} $y={354} $w={97} $h={19}>
            <ComboValue>note 5</ComboValue>
            <ComboArrow><Triangle dir="down" color="#555" size={7} /></ComboArrow>
          </Combo>
          <OkButton $x={485} $y={353} $w={34} $h={21}>ok</OkButton>

          <DropList $x={346} $y={373} $w={128} $h={108}>
            <DropRows>
              {listItems.map((item) => (
                <DropRow key={item} $on={item === "T1"}>{item}</DropRow>
              ))}
            </DropRows>
            <DropScroll>
              <DropThumb $top={51} />
            </DropScroll>
          </DropList>
          <CrossPointer />

          <PoweredLink $x={152} $y={458} $w={194} $h={18} $size={12.5} $color="#8cc63f" $spacing={0}>
            powered by Proxima Technolog
          </PoweredLink>
          <FootText $x={152} $y={481} $w={200} $h={13} $size={9} $color="#c5d2c8" $spacing={0}>
            Email : hello@proxima.cm
          </FootText>
          <FootText $x={865} $y={440} $w={100} $h={13} $size={9} $color="#dfe8e0" $spacing={0} $bold>
            Version 1.4.7 PRO
          </FootText>

          <ChartPanel $x={982} $y={6} $w={240} $h={241}>
            <ChartTitle $top={9} $size={14} $bold>RÉSULTAT N ET N-1</ChartTitle>
            <ChartPlot spec={resultChart} />
          </ChartPanel>
          <ChartPanel $x={982} $y={249} $w={239} $h={204}>
            <ChartTitle $top={10} $size={18}>Trésorerie N et N-1</ChartTitle>
            <ChartPlot spec={cashChart} />
          </ChartPanel>
        </Sheet>
        <ScrollColumn>
          <ScrollArrow><Triangle dir="up" /></ScrollArrow>
          <ScrollThumbV />
          <ScrollArrow><Triangle dir="down" /></ScrollArrow>
        </ScrollColumn>
      </SheetRow>

      <HScroll>
        <HTrack>
          <HLeft>
            <HEnd><Triangle dir="left" /></HEnd>
            <HThumb />
          </HLeft>
          <HEnd><Triangle dir="right" /></HEnd>
        </HTrack>
      </HScroll>

      <StatusBar>
        <StatusLeft>
          <span>PRÊT</span>
          <svg width="11" height="11" viewBox="0 0 11 11">
            <rect x="1" y="2" width="9" height="8" fill="#bcd9c8" />
            <path d="M3 4v5M5.5 4v5M8 4v5M1 6h9" stroke="#217346" />
            <circle cx="2" cy="2" r="2" fill="#e8f3ec" />
          </svg>
        </StatusLeft>
        <StatusRight>
          <ViewButton $on>
            <svg width="10" height="10" viewBox="0 0 10 10" fill="none" stroke="#e8f3ec">
              <path d="M.5.5h9v9h-9zM.5 3.5h9M.5 6.5h9M3.5.5v9M6.5.5v9" />
            </svg>
          </ViewButton>
          <ViewButton>
            <svg width="10" height="10" viewBox="0 0 10 10" fill="none" stroke="#bcd9c8">
              <path d="M.5.5h9v9h-9zM3 .5v9M7 .5v9" />
            </svg>
          </ViewButton>
          <ViewButton>
            <svg width="10" height="10" viewBox="0 0 10 10">
              <path d="M.5.5h9v9h-9z" fill="none" stroke="#e8f3ec" />
              <path d="M2 .5h2v5H2zM6 .5h2v5H6z" fill="#e8f3ec" />
            </svg>
          </ViewButton>
          <ZoomSign $ml={2}>−</ZoomSign>
          <ZoomSlider><ZoomThumb /></ZoomSlider>
          <ZoomSign>+</ZoomSign>
          <ZoomValue>115 %</ZoomValue>
        </StatusRight>
      </StatusBar>
      <BlackBar />
    </Window>
  );
}
